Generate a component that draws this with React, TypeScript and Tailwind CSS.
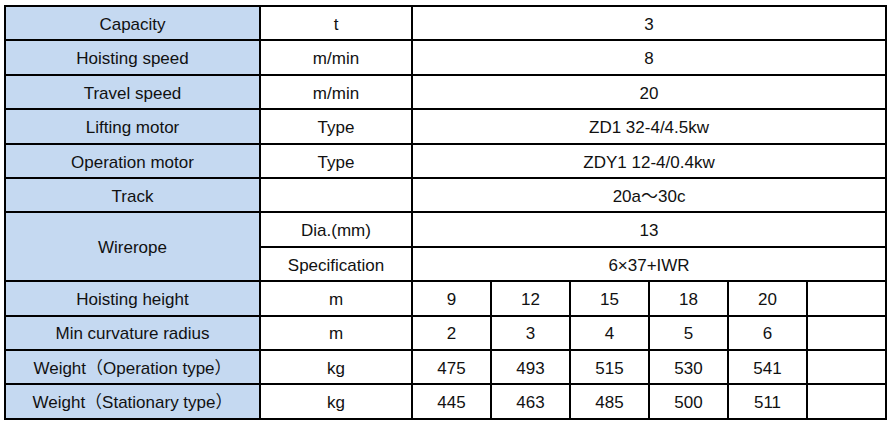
import React from "react";

const label = "border-2 border-black bg-[#C5D9F1] text-center pt-[3px]";
const cell = "border-2 border-black bg-white text-center pt-[3px]";

const specRows: [string, string, string][] = [
  ["Capacity", "t", "3"],
  ["Hoisting speed", "m/min", "8"],
  ["Travel speed", "m/min", "20"],
  ["Lifting motor", "Type", "ZD1 32-4/4.5kw"],
  ["Operation motor", "Type", "ZDY1 12-4/0.4kw"],
  ["Track", "", "20a\uFF5E30c"],
];

const gridRows: [string, string, string[]][] = [
  ["Hoisting height", "m", ["9", "12", "15", "18", "20", ""]],
  ["Min curvature radius", "m", ["2", "3", "4", "5", "6", ""]],
  ["Weight\uFF08Operation type\uFF09", "kg", ["475", "493", "515", "530", "541", ""]],
  ["Weight\uFF08Stationary type\uFF09", "kg", ["445", "463", "485", "500", "511", ""]],
];

const App: React.FC = () => {
  return (
    <div className="w-[892px] h-[424px] bg-white pt-[5px] pl-[4px] font-['Liberation_Sans','Noto_Sans_CJK_SC',sans-serif] text-[17px] text-[#111]">
      <table className="table-fixed border-collapse w-[882px]">
        <colgroup>
          <col className="w-[255px]" />
          <col className="w-[152px]" />
          <col className="w-[79px]" />
          <col className="w-[79px]" />
          <col className="w-[79px]" />
          <col className="w-[79px]" />
          <col className="w-[79px]" />
          <col className="w-[79px]" />
        </colgroup>
        <tbody>
          {specRows.map(([name, unit, value]) => (
            <tr key={name} className="h-[34.4px]">
              <td className={label}>{name}</td>
              <td className={cell}>{unit}</td>
              <td className={cell} colSpan={6}>
                {value}
              </td>
            </tr>
          ))}
          <tr className="h-[34.4px]">
            <td className={label} rowSpan={2}>
              Wirerope
            </td>
            <td className={cell}>Dia.(mm)</td>
            <td className={cell} colSpan={6}>
              13
            </td>
          </tr>
          <tr className="h-[34.4px]">
            <td className={cell}>Specification</td>
            <td className={cell} colSpan={6}>
              6×37+IWR
            </td>
          </tr>
          {gridRows.map(([name, unit, values]) => (
            <tr key={name} className="h-[34.4px]">
              <td className={label}>{name}</td>
              <td className={cell}>{unit}</td>
              {values.map((v, i) => (
                <td key={i} className={cell}>
                  {v}
                </td>
              ))}
            </tr>
          ))}
        </tbody>
      </table>
    </div>
  );
};

export default App;
